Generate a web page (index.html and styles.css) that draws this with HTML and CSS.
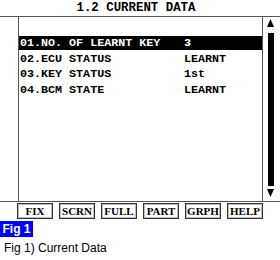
FILE: index.html
```html
<!DOCTYPE html>
<html>
<head>
<meta charset="utf-8">
<link rel="stylesheet" href="styles.css">
</head>
<body>
<div class="title">1.2 CURRENT DATA</div>
<div class="screen">
  <div class="gutter"></div>
  <div class="content">
    <div class="row sel"><span class="lbl">01.NO. OF LEARNT KEY</span><span class="val">3</span></div>
    <div class="row"><span class="lbl">02.ECU STATUS</span><span class="val">LEARNT</span></div>
    <div class="row"><span class="lbl">03.KEY STATUS</span><span class="val">1st</span></div>
    <div class="row"><span class="lbl">04.BCM STATE</span><span class="val">LEARNT</span></div>
  </div>
  <div class="scroll">
    <svg width="17" height="184" viewBox="0 0 17 184">
      <polygon points="7.5,2 4,10 11,10" fill="#000"/>
      <rect x="5" y="16" width="6" height="153" fill="#000"/>
      <polygon points="4,172 11,172 7.5,180" fill="#000"/>
    </svg>
  </div>
</div>
<div class="buttons">
  <div class="btn">FIX</div>
  <div class="btn">SCRN</div>
  <div class="btn">FULL</div>
  <div class="btn">PART</div>
  <div class="btn">GRPH</div>
  <div class="btn">HELP</div>
</div>
<div class="fig">Fig 1</div>
<div class="caption">Fig 1) Current Data</div>
</body>
</html>
```
FILE: styles.css
```css
html, body {
  margin: 0;
  padding: 0;
  background: #fff;
}
body {
  width: 280px;
  height: 260px;
  overflow: hidden;
  font-family: "Liberation Mono", "DejaVu Sans Mono", monospace;
  color: #000;
}
.title {
  height: 16px;
  line-height: 16px;
  text-align: center;
  font-weight: bold;
  font-size: 12.4px;
  padding-right: 8px;
}
.screen {
  display: flex;
  height: 184px;
  border-top: 1px solid #555;
  border-bottom: 1px solid #555;
}
.gutter {
  width: 18px;
  border-right: 1px solid #555;
}
.content {
  flex: 1;
  padding-top: 19px;
  display: flex;
  flex-direction: column;
  gap: 1.5px;
}
.row {
  height: 14px;
  line-height: 14px;
  display: flex;
  font-weight: bold;
  font-size: 11.7px;
  padding-left: 1px;
}
.row.sel {
  background: #000;
  color: #fff;
}
.lbl {
  width: 164px;
  white-space: pre;
}
.val {
  white-space: pre;
}
.scroll {
  width: 17px;
  border-left: 1px solid #555;
}
.scroll svg {
  display: block;
}
.buttons {
  display: flex;
  gap: 6px;
  padding-left: 17px;
  margin-top: 1px;
}
.btn {
  width: 36px;
  height: 16px;
  box-sizing: border-box;
  border: 1px solid #333;
  box-shadow: inset 0 0 0 1px #bbb;
  text-align: center;
  line-height: 14px;
  font-family: "Liberation Serif", serif;
  font-weight: bold;
  font-size: 11px;
}
.fig {
  margin-top: 2px;
  width: 33px;
  height: 16px;
  background: #0000ff;
  color: #fff;
  font-family: "Liberation Sans", Arial, sans-serif;
  font-weight: bold;
  font-size: 12px;
  line-height: 16px;
  text-align: center;
}
.caption {
  margin-top: 4px;
  padding-left: 4px;
  font-family: "Liberation Sans", Arial, sans-serif;
  font-size: 12px;
  line-height: 14px;
}
```
